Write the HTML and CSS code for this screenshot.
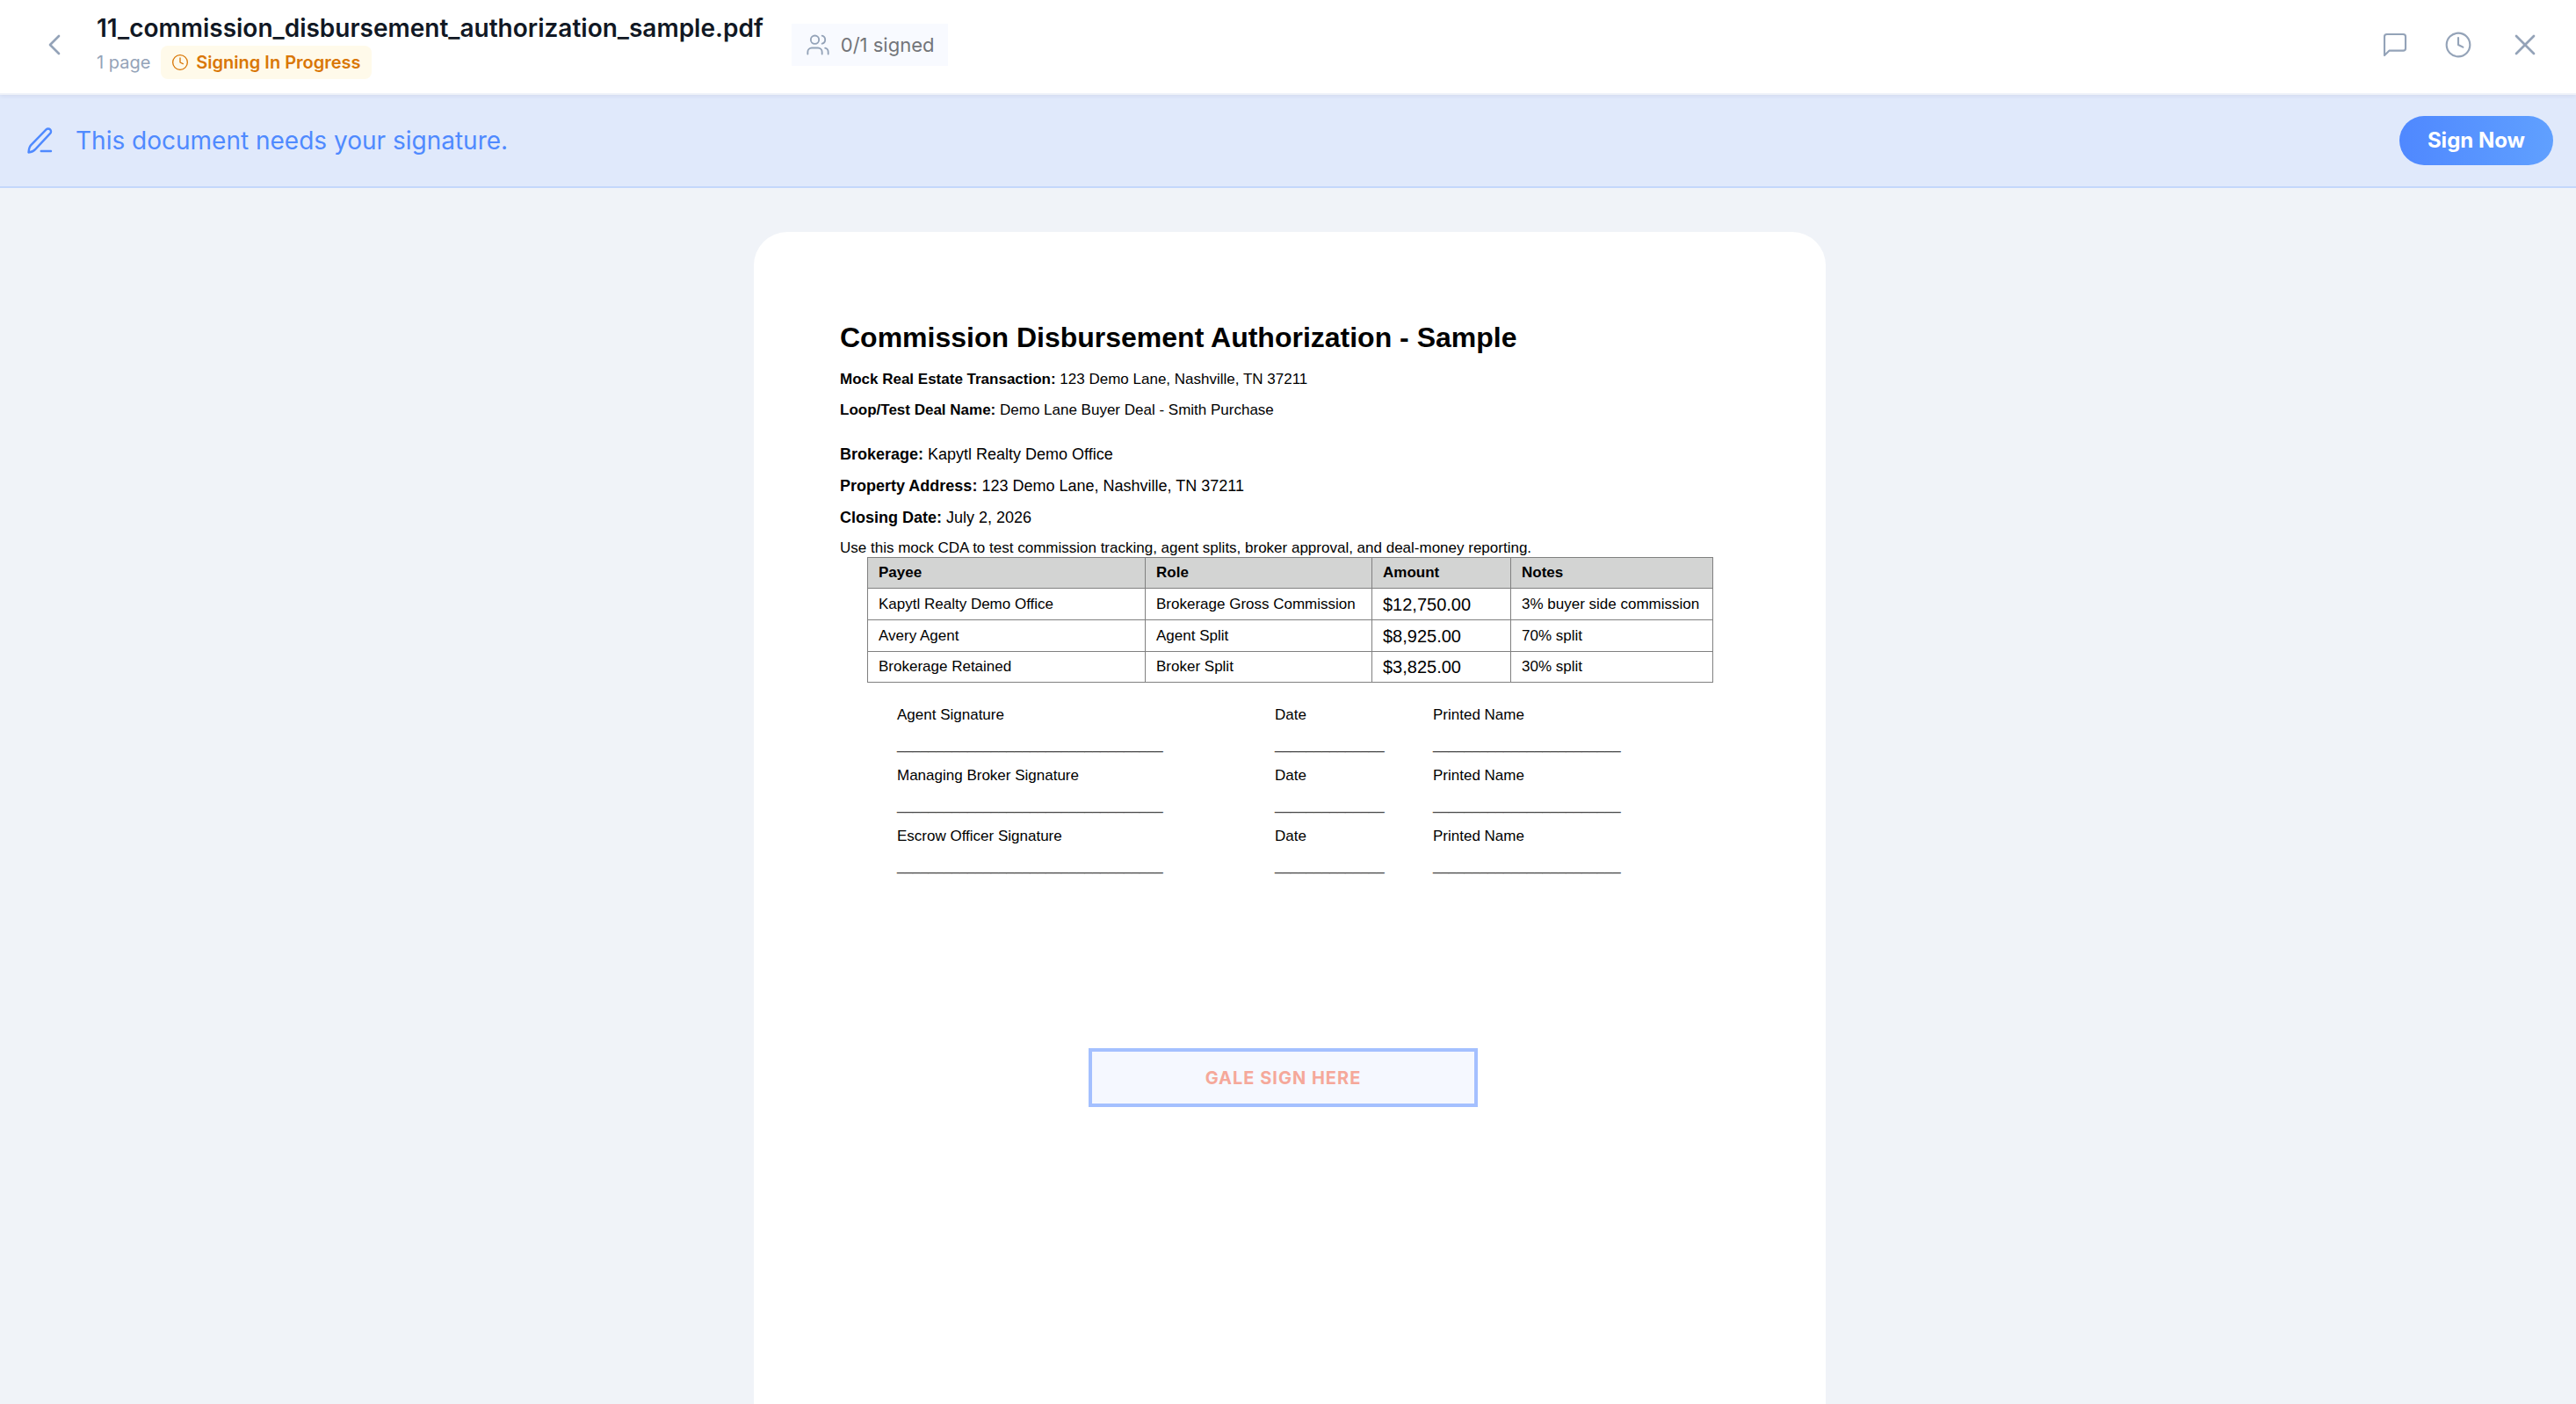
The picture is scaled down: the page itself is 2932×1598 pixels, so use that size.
FILE: index.html
```html
<!DOCTYPE html>
<html lang="en">
<head>
<meta charset="utf-8">
<title>11_commission_disbursement_authorization_sample.pdf</title>
<link rel="stylesheet" href="styles.css">
</head>
<body>
<div class="viewer">
  <header class="topbar">
    <button class="icon-btn icon-btn-lg" type="button" aria-label="Back">
      <svg viewBox="0 0 24 24"><path d="m15 18-6-6 6-6"/></svg>
    </button>
    <div class="file">
      <h1 class="file-name">11_commission_disbursement_authorization_sample.pdf</h1>
      <div class="file-meta">
        <span>1 page</span>
        <span class="status">
          <svg viewBox="0 0 24 24"><circle cx="12" cy="12" r="10"/><path d="M12 6v6l4 2"/></svg>
          Signing In Progress
        </span>
      </div>
    </div>
    <div class="signers">
      <svg viewBox="0 0 24 24"><path d="M16 21v-2a4 4 0 0 0-4-4H6a4 4 0 0 0-4 4v2"/><circle cx="9" cy="7" r="4"/><path d="M22 21v-2a4 4 0 0 0-3-3.87"/><path d="M16 3.13a4 4 0 0 1 0 7.75"/></svg>
      <span>0/1 signed</span>
    </div>
    <div class="actions">
      <button class="icon-btn" type="button" aria-label="Comments">
        <svg viewBox="0 0 24 24"><path d="M21 15a2 2 0 0 1-2 2H7l-4 4V5a2 2 0 0 1 2-2h14a2 2 0 0 1 2 2z"/></svg>
      </button>
      <button class="icon-btn" type="button" aria-label="History">
        <svg viewBox="0 0 24 24"><circle cx="12" cy="12" r="10"/><path d="M12 6v6l4 2"/></svg>
      </button>
      <button class="icon-btn icon-btn-lg" type="button" aria-label="Close">
        <svg viewBox="0 0 24 24"><path d="M18 6 6 18"/><path d="m6 6 12 12"/></svg>
      </button>
    </div>
  </header>

  <section class="banner">
    <svg viewBox="0 0 24 24"><path d="M12.5 20H20"/><path d="M16.4 3.6a2.12 2.12 0 0 1 3 3L8.2 18.6C7 20 5.200 20.800 3 21c.2-2.200.4-4 1.700-5.400Z"/></svg>
    <p class="banner-text">This document needs your signature.</p>
    <button class="sign-now" type="button">Sign Now</button>
  </section>

  <main class="canvas">
    <article class="page">
      <h2 class="doc-title">Commission Disbursement Authorization - Sample</h2>
      <p class="ref"><b>Mock Real Estate Transaction:</b> 123 Demo Lane, Nashville, TN 37211</p>
      <p class="ref ref-last"><b>Loop/Test Deal Name:</b> Demo Lane Buyer Deal - Smith Purchase</p>
      <p class="fact"><b>Brokerage:</b> Kapytl Realty Demo Office</p>
      <p class="fact"><b>Property Address:</b> 123 Demo Lane, Nashville, TN 37211</p>
      <p class="fact"><b>Closing Date:</b> July 2, 2026</p>
      <p class="note">Use this mock CDA to test commission tracking, agent splits, broker approval, and deal-money reporting.</p>

      <table class="splits">
        <colgroup><col class="col-payee"><col class="col-role"><col class="col-amount"><col class="col-notes"></colgroup>
        <thead>
          <tr><th>Payee</th><th>Role</th><th>Amount</th><th>Notes</th></tr>
        </thead>
        <tbody>
          <tr><td>Kapytl Realty Demo Office</td><td>Brokerage Gross Commission</td><td class="amount">$12,750.00</td><td>3% buyer side commission</td></tr>
          <tr><td>Avery Agent</td><td>Agent Split</td><td class="amount">$8,925.00</td><td>70% split</td></tr>
          <tr><td>Brokerage Retained</td><td>Broker Split</td><td class="amount">$3,825.00</td><td>30% split</td></tr>
        </tbody>
      </table>

      <div class="signatures">
        <div class="sig-row">
          <div>Agent Signature<span class="rule">__________________________________</span></div>
          <div>Date<span class="rule">______________</span></div>
          <div>Printed Name<span class="rule">________________________</span></div>
        </div>
        <div class="sig-row">
          <div>Managing Broker Signature<span class="rule">__________________________________</span></div>
          <div>Date<span class="rule">______________</span></div>
          <div>Printed Name<span class="rule">________________________</span></div>
        </div>
        <div class="sig-row">
          <div>Escrow Officer Signature<span class="rule">__________________________________</span></div>
          <div>Date<span class="rule">______________</span></div>
          <div>Printed Name<span class="rule">________________________</span></div>
        </div>
      </div>

      <button class="sign-field" type="button">GALE SIGN HERE</button>
    </article>
  </main>
</div>
</body>
</html>
```
FILE: styles.css
```css
* {
  box-sizing: border-box;
}

body,
h1,
h2,
p {
  margin: 0;
}

body {
  font-family: Inter, "Liberation Sans", sans-serif;
}

button {
  font-family: inherit;
  border: 0;
  cursor: pointer;
}

svg {
  display: block;
  flex: none;
  fill: none;
  stroke: currentColor;
  stroke-width: 1.6;
  stroke-linecap: round;
  stroke-linejoin: round;
}

.viewer {
  display: flex;
  flex-direction: column;
  height: 100vh;
  background: #f0f3f8;
}

/* Top bar */

.topbar {
  position: relative;
  display: flex;
  align-items: center;
  flex: none;
  padding: 12px 18px 16px 22px;
  background: #fff;
  border-bottom: 2px solid #eff2f9;
  box-shadow: 0 2px 4px rgba(30, 41, 90, 0.06);
}

.icon-btn {
  padding: 20px;
  background: none;
  color: #94a3b8;
}

.icon-btn svg {
  width: 32px;
  height: 32px;
}

.icon-btn-lg {
  padding: 19px 20px;
}

.icon-btn-lg svg {
  width: 40px;
  height: 40px;
}

.file {
  margin-left: 8px;
}

.file-name {
  font-size: 28px;
  line-height: 40px;
  font-weight: 600;
  color: #111824;
}

.file-meta {
  display: flex;
  align-items: center;
  gap: 12px;
  font-size: 20px;
  color: #94a3b8;
}

.status {
  display: flex;
  align-items: center;
  gap: 8px;
  padding: 0 12px;
  line-height: 38px;
  font-weight: 600;
  color: #d97706;
  background: #fffaea;
  border-radius: 8px;
}

.status svg {
  width: 20px;
  height: 20px;
}

.signers {
  display: flex;
  align-items: center;
  gap: 12px;
  margin-left: 32px;
  padding: 0 16px;
  font-size: 22px;
  line-height: 48px;
  color: #737579;
  background: #f8faff;
}

.signers svg {
  width: 28px;
  height: 28px;
  color: #94a3b8;
}

.actions {
  display: flex;
  align-items: center;
  height: 78px;
  margin-left: auto;
}

/* Signature banner */

.banner {
  display: flex;
  align-items: center;
  flex: none;
  gap: 22px;
  padding: 24px 26px 24px 28px;
  color: #4f8aff;
  background: #e0e9fb;
  border-bottom: 2px solid #c3d7fb;
}

.banner svg {
  width: 36px;
  height: 36px;
}

.banner-text {
  font-size: 28px;
  line-height: 40px;
}

.sign-now {
  margin-left: auto;
  padding: 0 32px;
  font-size: 24px;
  line-height: 56px;
  font-weight: 700;
  color: #fff;
  background: linear-gradient(90deg, #4f88ff, #60a0ff);
  border-radius: 28px;
}

/* Document */

.canvas {
  flex: 1;
  min-height: 0;
  padding: 50px 0 50px 4px;
  overflow-y: auto;
  scrollbar-width: none;
}

.page {
  width: 1220px;
  max-width: 100%;
  aspect-ratio: 17 / 22;
  margin: 0 auto;
  padding: 100px 98px;
  font-family: "Liberation Sans", Arial, sans-serif;
  font-size: 17px;
  line-height: 20px;
  color: #000;
  background: #fff;
  border-radius: 38px;
}

.doc-title {
  margin-bottom: 18px;
  font-size: 32px;
  line-height: 40px;
}

.ref {
  margin-bottom: 15px;
}

.ref-last {
  margin-bottom: 30px;
}

.fact {
  margin-bottom: 16px;
  font-size: 18px;
}

.note {
  margin-top: -1px;
}

.splits {
  width: 963px;
  margin-left: 31px;
  table-layout: fixed;
  border-collapse: collapse;
}

.col-payee {
  width: 316px;
}

.col-role {
  width: 258px;
}

.col-amount {
  width: 158px;
}

.splits th,
.splits td {
  height: 36px;
  padding: 0 12px;
  text-align: left;
  border: 1px solid #808080;
}

.splits th,
.splits tr:last-child td {
  height: 35px;
}

.splits th {
  background: #d3d4d3;
}

.splits .amount {
  font-size: 20px;
}

.signatures {
  display: grid;
  gap: 15px;
  margin: 27px 0 0 65px;
}

.sig-row {
  display: grid;
  grid-template-columns: 430px 180px 1fr;
}

.rule {
  display: block;
  margin-top: 14px;
  font-size: 16px;
  color: #444;
}

.sign-field {
  display: block;
  width: 443px;
  height: 67px;
  margin: 197px 0 0 283px;
  font-family: Inter, "Liberation Sans", sans-serif;
  font-size: 20px;
  font-weight: 700;
  letter-spacing: 1px;
  color: #f5a89a;
  background: #f5f8ff;
  border: 4px solid #a4c0ff;
}
```
